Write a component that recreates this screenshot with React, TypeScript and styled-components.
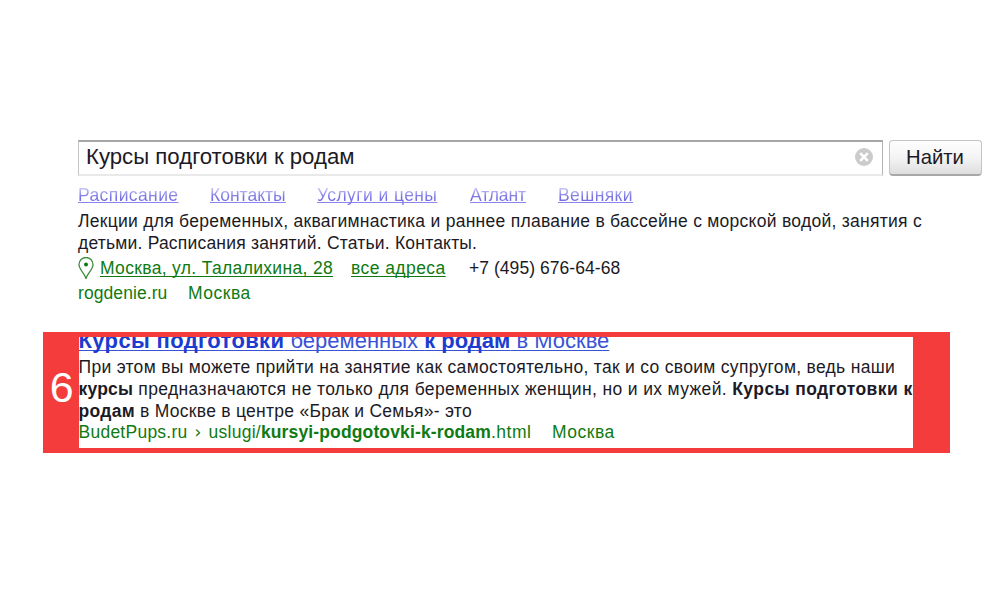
import React from "react";
import styled, { createGlobalStyle } from "styled-components";

const GlobalStyle = createGlobalStyle`
  body {
    margin: 0;
    background: #fff;
    font-family: "Liberation Sans", Arial, sans-serif;
    color: #1c1a26;
  }
`;

const Page = styled.main`
  box-sizing: border-box;
  width: 1000px;
  height: 600px;
  padding: 140px 0 0 43px;
  overflow: hidden;
`;

const SearchForm = styled.div`
  display: flex;
  align-items: flex-start;
  gap: 6px;
  margin-left: 35px;
  height: 44px;
`;

const SearchField = styled.div`
  box-sizing: border-box;
  display: flex;
  align-items: center;
  justify-content: space-between;
  width: 805px;
  height: 36px;
  padding: 0 9px 2px 7px;
  border: solid;
  border-color: #a6a6a6 #b4b4b4 #e9e9e9 #c4c4c4;
  border-width: 2px 1px 2px 1px;
`;

const Query = styled.span`
  font-size: 22.2px;
  line-height: 30px;
  white-space: pre;
`;

const SearchButton = styled.button`
  box-sizing: border-box;
  width: 93px;
  height: 36px;
  padding: 0 1px 1px 0;
  border: 1px solid #c4c4c4;
  border-bottom: 2px solid #a8a8a8;
  border-radius: 4px;
  background: linear-gradient(#fefefe, #f4f4f4 50%, #dedede);
  color: #1c1a26;
  font: 20.3px/32px "Liberation Sans", Arial, sans-serif;
`;

const Result = styled.section`
  margin-left: 35px;
`;

const Line = styled.div<{ $spacing?: number; $height?: number; $color?: string }>`
  height: ${(p) => p.$height ?? 22}px;
  font-size: 17.5px;
  line-height: 22px;
  letter-spacing: ${(p) => p.$spacing ?? 0}px;
  color: ${(p) => p.$color ?? "inherit"};
  white-space: pre;
`;

const Row = styled(Line)`
  display: flex;
  align-items: flex-start;
`;

const Part = styled.span<{ $width?: number; $spacing?: number }>`
  flex: none;
  width: ${(p) => (p.$width ? `${p.$width}px` : "auto")};
  letter-spacing: ${(p) => p.$spacing ?? 0}px;
`;

const Link = styled.a`
  color: #0f7a12;
  text-decoration: underline;
  text-decoration-thickness: 1px;
  text-underline-offset: 2px;
  text-decoration-skip-ink: none;
`;

const SiteLink = styled(Link)`
  background: linear-gradient(#c3c0f6 20%, #7670e4 62%);
  background-clip: text;
  color: transparent;
  text-decoration-color: #8a84ec;
  text-underline-offset: 1px;
`;

const Bold = styled.b<{ $spacing: number }>`
  letter-spacing: ${(p) => p.$spacing}px;
`;

const Separator = styled.span`
  display: inline-block;
  width: 21px;
  text-align: center;
  font-family: "DejaVu Sans", sans-serif;
  font-size: 17px;
  line-height: 18px;
`;

const Highlight = styled.section`
  position: relative;
  box-sizing: border-box;
  display: flex;
  width: 907px;
  height: 121px;
  margin-top: 28px;

  &::after {
    content: "";
    position: absolute;
    inset: 0;
    border: solid #f43c3c;
    border-width: 5px 37px 5px 36px;
  }
`;

const Rank = styled.div`
  position: relative;
  z-index: 1;
  width: 35.5px;
  padding: 31px 0 0 2px;
  box-sizing: border-box;
  text-align: center;
  color: #fff;
  font-size: 43px;
  line-height: 48px;
`;

const Snippet = styled.div`
  width: 834px;
`;

const Title = styled.h2`
  margin: -4px 0 0;
  height: 28px;
  font-size: 22px;
  line-height: 26px;
  font-weight: 400;
  color: #3a53d6;
  white-space: pre;
  text-decoration: underline;
  text-decoration-thickness: 1px;
  text-underline-offset: 2px;
  text-decoration-skip-ink: none;

  b {
    color: #1c3ccf;
  }
`;

const ClearIcon = () => (
  <svg width="18" height="18" viewBox="0 0 18 18">
    <circle cx="9" cy="9" r="9" fill="#cbcbcb" />
    <path d="M5.200 5.200l7.600 7.600M12.800 5.200l-7.600 7.600" stroke="#fff" strokeWidth="2.600" />
  </svg>
);

const PinIcon = () => (
  <svg width="16" height="24" viewBox="0 0 16 24">
    <path
      d="M8 22C7.600 17 1 13 1 7.500a7 7 0 0 1 14 0c0 5.500-6.600 9.500-7 14.500z"
      fill="none"
      stroke="#3a8f3c"
      strokeWidth="1.300"
    />
    <circle cx="8" cy="7.500" r="2" fill="#0f7a12" />
  </svg>
);

export default function App() {
  return (
    <>
      <GlobalStyle />
      <Page>
        <SearchForm>
          <SearchField>
            <Query>Курсы подготовки к родам</Query>
            <ClearIcon />
          </SearchField>
          <SearchButton>Найти</SearchButton>
        </SearchForm>
        <Result>
          <Row $height={26}>
            <Part $width={132} $spacing={0.4}><SiteLink>Расписание</SiteLink></Part>
            <Part $width={107}><SiteLink>Контакты</SiteLink></Part>
            <Part $width={153} $spacing={0.4}><SiteLink>Услуги и цены</SiteLink></Part>
            <Part $width={88} $spacing={-0.1}><SiteLink>Атлант</SiteLink></Part>
            <Part $spacing={0.4}><SiteLink>Вешняки</SiteLink></Part>
          </Row>
          <Line $spacing={0.27}>Лекции для беременных, аквагимнастика и раннее плавание в бассейне с морской водой, занятия с</Line>
          <Line $height={25} $spacing={0.2}>детьми. Расписания занятий. Статьи. Контакты.</Line>
          <Row $height={25}>
            <Part $width={22}><PinIcon /></Part>
            <Part $width={251} $spacing={0.33}><Link>Москва, ул. Талалихина, 28</Link></Part>
            <Part $width={118} $spacing={0.43}><Link>все адреса</Link></Part>
            <Part $spacing={0.05}>+7 (495) 676-64-68</Part>
          </Row>
          <Row $color="#0f7a12">
            <Part $width={110} $spacing={0.08}>rogdenie.ru</Part>
            <Part $spacing={0.5}>Москва</Part>
          </Row>
        </Result>
        <Highlight>
          <Rank>6</Rank>
          <Snippet>
            <Title><Bold $spacing={0.36}>Курсы подготовки</Bold> беременных <Bold $spacing={0}>к родам</Bold> в Москве</Title>
            <Line $spacing={0.3}>При этом вы можете прийти на занятие как самостоятельно, так и со своим супругом, ведь наши</Line>
            <Line $spacing={0.36}><Bold $spacing={0.2}>курсы</Bold> предназначаются не только для беременных женщин, но и их мужей. <Bold $spacing={0.42}>Курсы подготовки к</Bold></Line>
            <Line $height={21} $spacing={0.27}><Bold $spacing={0.3}>родам</Bold> в Москве в центре «Брак и Семья»- это</Line>
            <Row $color="#0f7a12">
              <Part $width={473.5} $spacing={0.25}>BudetPups.ru<Separator>›</Separator>uslugi/<Bold $spacing={0.14}>kursyi-podgotovki-k-rodam</Bold><Part $spacing={0.5}>.html</Part></Part>
              <Part $spacing={0.5}>Москва</Part>
            </Row>
          </Snippet>
        </Highlight>
      </Page>
    </>
  );
}
